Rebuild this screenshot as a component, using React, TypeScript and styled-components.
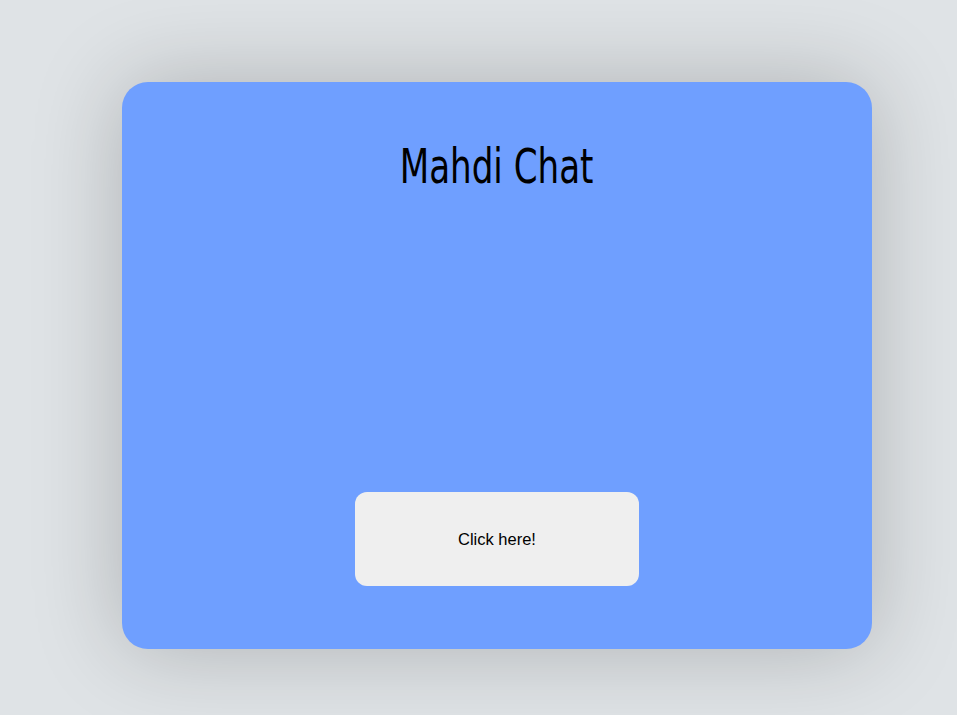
import React from 'react';
import { createGlobalStyle, styled } from 'styled-components';

const GlobalStyle = createGlobalStyle`
  html, body {
    margin: 0;
    padding: 0;
    background: #dfe3e6;
  }
`;

const App = () => {
  return (
    <>
      <GlobalStyle />
      <PageSection>
        <ChatCard>
          <TitleContainer>Mahdi Chat</TitleContainer>
          <StartButton>Click here!</StartButton>
        </ChatCard>
      </PageSection>
    </>
  );
};

export default App;

const PageSection = styled.div`
  width: 957px;
  height: 715px;
  box-sizing: border-box;
  padding: 82px 0 0 122px;
  background: #dfe3e6;
`;

const ChatCard = styled.div`
  width: 750px;
  height: 567px;
  box-sizing: border-box;
  padding: 56px 0 63px 0;

  display: flex;
  flex-direction: column;
  align-items: center;
  justify-content: space-between;

  background: #6f9fff;
  border-radius: 26px;
  box-shadow: 0 0 90px rgba(0, 0, 0, 0.22);
`;

// no PT Sans Narrow offline, so squeeze the condensed face to its width
const TitleContainer = styled.div`
  display: inline-block;
  color: #000;
  font-family: 'DejaVu Sans Condensed', sans-serif;
  font-size: 48px;
  font-weight: 400;
  line-height: 56px;
  transform: scaleX(0.79);
`;

const StartButton = styled.button`
  width: 284px;
  height: 94px;
  border: none;
  border-radius: 12px;
  background: #efefef;
  color: #000;
  font-family: 'Liberation Sans', Arial, sans-serif;
  font-size: 16.5px;
  cursor: pointer;
`;
